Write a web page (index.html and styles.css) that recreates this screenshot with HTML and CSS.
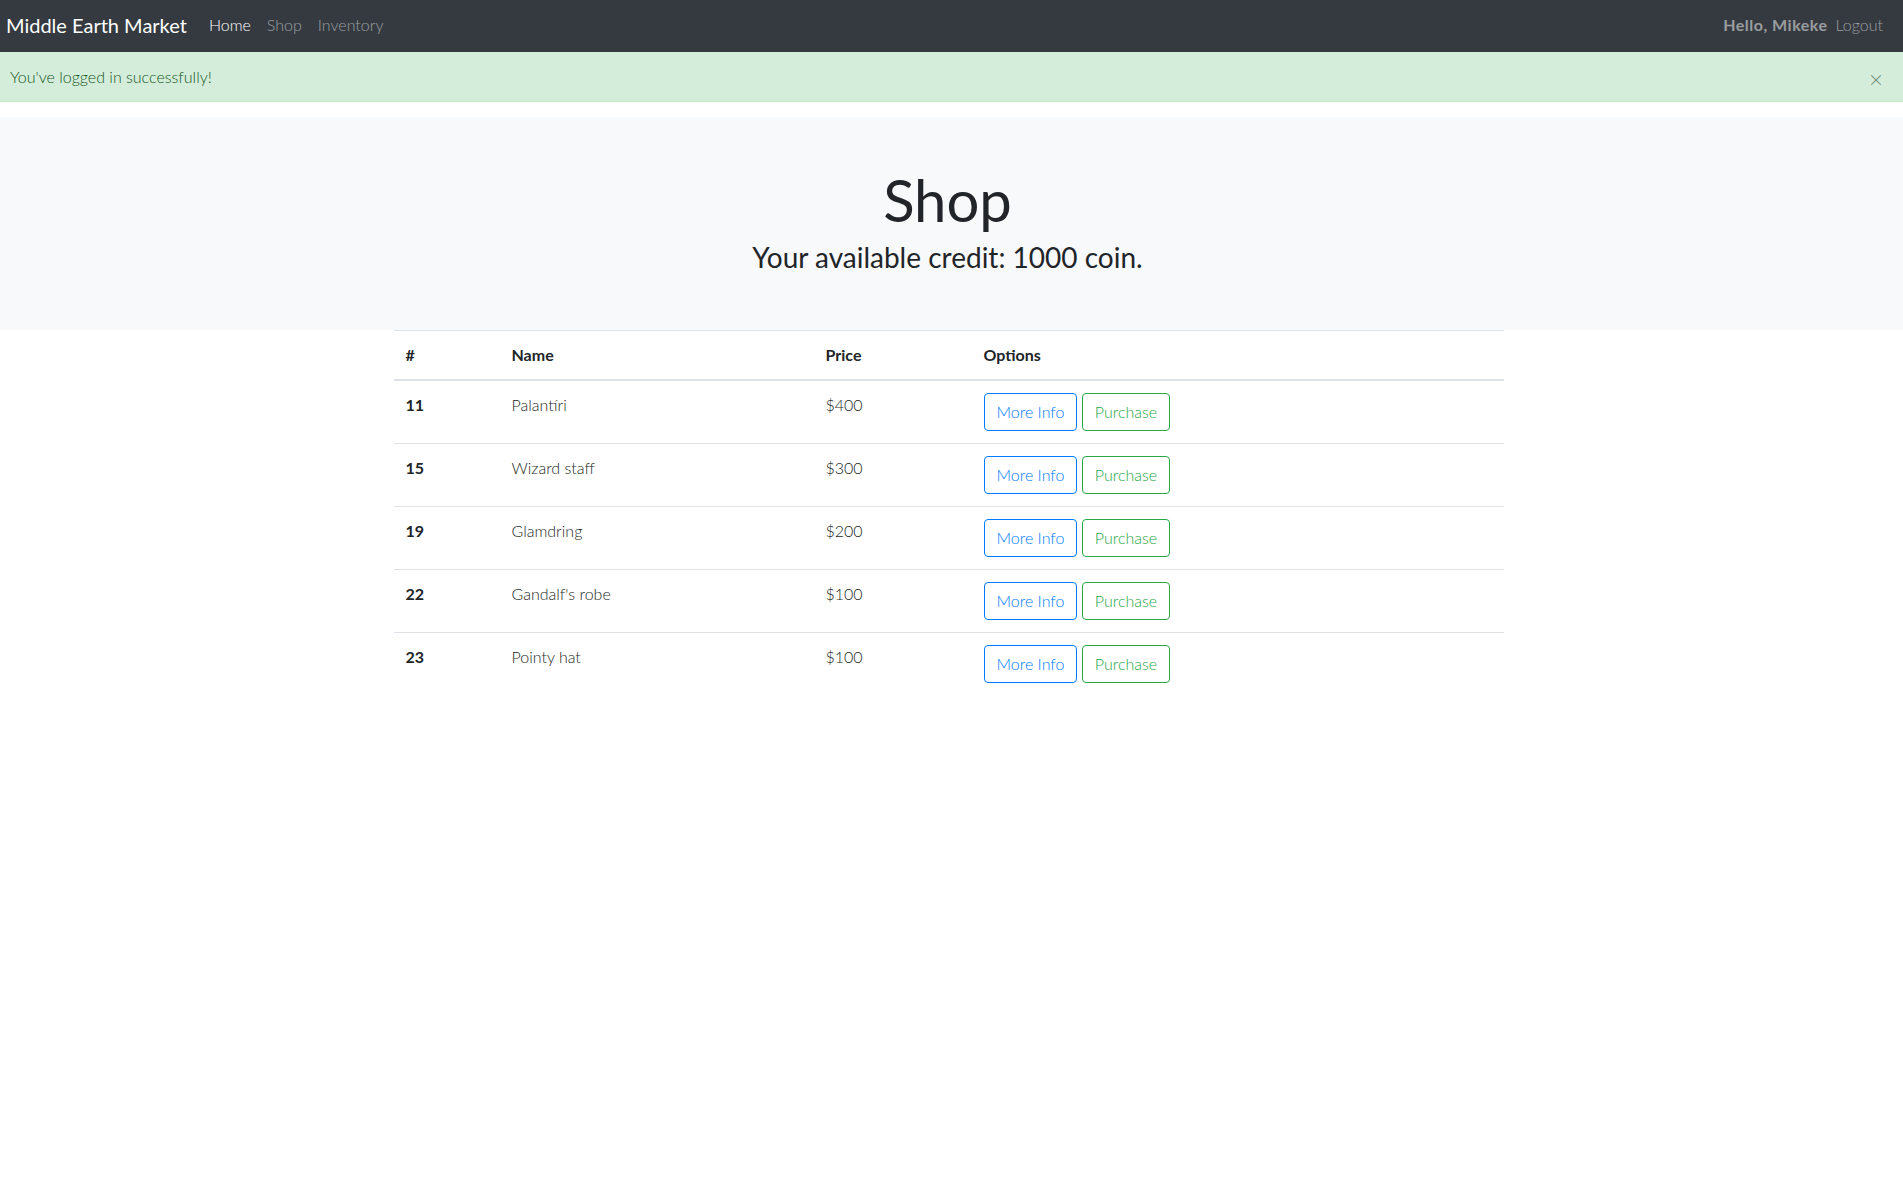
FILE: index.html
```html
<!DOCTYPE html>
<html>
<head>
<meta charset="utf-8">
<title>Middle Earth Market</title>
<link rel="stylesheet" href="styles.css">
</head>
<body>
<nav class="navbar">
  <div class="nav-left">
    <a class="brand" href="#">Middle Earth Market</a>
    <a class="nav-link active" href="#">Home</a>
    <a class="nav-link" href="#">Shop</a>
    <a class="nav-link" href="#">Inventory</a>
  </div>
  <div class="nav-right">
    <span class="hello">Hello, Mikeke</span>
    <a class="nav-link" href="#">Logout</a>
  </div>
</nav>
<div class="alert">
  <span>You've logged in successfully!</span>
  <span class="close">&times;</span>
</div>
<div class="jumbotron">
  <h1 class="title">Shop</h1>
  <p class="credit">Your available credit: 1000 coin.</p>
</div>
<div class="container">
  <table class="table">
    <thead>
      <tr><th class="c1">#</th><th class="c2">Name</th><th class="c3">Price</th><th>Options</th></tr>
    </thead>
    <tbody>
      <tr><th>11</th><td>Palantíri</td><td>$400</td><td><button class="btn btn-blue">More Info</button> <button class="btn btn-green">Purchase</button></td></tr>
      <tr><th>15</th><td>Wizard staff</td><td>$300</td><td><button class="btn btn-blue">More Info</button> <button class="btn btn-green">Purchase</button></td></tr>
      <tr><th>19</th><td>Glamdring</td><td>$200</td><td><button class="btn btn-blue">More Info</button> <button class="btn btn-green">Purchase</button></td></tr>
      <tr><th>22</th><td>Gandalf's robe</td><td>$100</td><td><button class="btn btn-blue">More Info</button> <button class="btn btn-green">Purchase</button></td></tr>
      <tr><th>23</th><td>Pointy hat</td><td>$100</td><td><button class="btn btn-blue">More Info</button> <button class="btn btn-green">Purchase</button></td></tr>
    </tbody>
  </table>
</div>
</body>
</html>
```

FILE: styles.css
```css
* { box-sizing: border-box; }
html, body { margin: 0; padding: 0; }
body {
  font-family: Lato, "Noto Sans", sans-serif;
  font-size: 16px;
  line-height: 1.5;
  color: #212529;
  background: #fff;
}
a { text-decoration: none; }

.navbar {
  background: #343a40;
  height: 52px;
  display: flex;
  align-items: center;
  justify-content: space-between;
  padding: 0 12px 2px 6px;
}
.nav-left, .nav-right { display: flex; align-items: center; }
.brand {
  color: #fff;
  font-size: 20px;
  margin-right: 22px;
  line-height: 30px;
}
.nav-link {
  color: rgba(255,255,255,.5);
  padding: 0 8px;
  font-size: 16px;
  font-weight: 300;
}
.nav-link.active { color: #fff; padding-left: 0; }
.hello {
  color: rgba(255,255,255,.5);
  font-weight: bold;
  letter-spacing: 0.5px;
}

.alert {
  background: #d4edda;
  color: #155724;
  border-bottom: 1px solid #c3e6cb;
  height: 50px;
  display: flex;
  align-items: center;
  justify-content: space-between;
  padding: 0 20px 0 10px;
  margin-bottom: 15px;
  font-weight: 300;
}
.close {
  font-size: 24px;
  line-height: 1;
  color: #6e8a75;
  font-weight: 300;
  margin-top: 4px;
}

.jumbotron {
  background: #f8f9fa;
  text-align: center;
  padding: 48px 8px 0 0;
  height: 213px;
}
.title {
  font-size: 58px;
  font-weight: 400;
  line-height: 1.2;
  margin: 0;
}
.credit {
  font-size: 28px;
  line-height: 1.2;
  margin: 6px 0 0;
}

.container {
  width: 1110px;
  margin: 0 auto;
  position: relative;
  left: -3px;
}
.table {
  width: 100%;
  border-collapse: collapse;
}
.table th, .table td {
  padding: 12px;
  text-align: left;
  vertical-align: top;
  border-top: 1px solid #dee2e6;
}
.table thead th {
  border-bottom: 2px solid #dee2e6;
  vertical-align: bottom;
}
.c1 { width: 106px; }
.c2 { width: 314px; }
.c3 { width: 158px; }
td { font-weight: 300; color: #1b1f23; }

.btn {
  font-family: inherit;
  font-size: 16px;
  font-weight: 300;
  line-height: 24px;
  padding: 6px 12px;
  border-radius: 4px;
  background: transparent;
  cursor: pointer;
}
.btn-blue { color: #007bff; border: 1px solid #007bff; }
.btn-green { color: #28a745; border: 1px solid #28a745; }
```
